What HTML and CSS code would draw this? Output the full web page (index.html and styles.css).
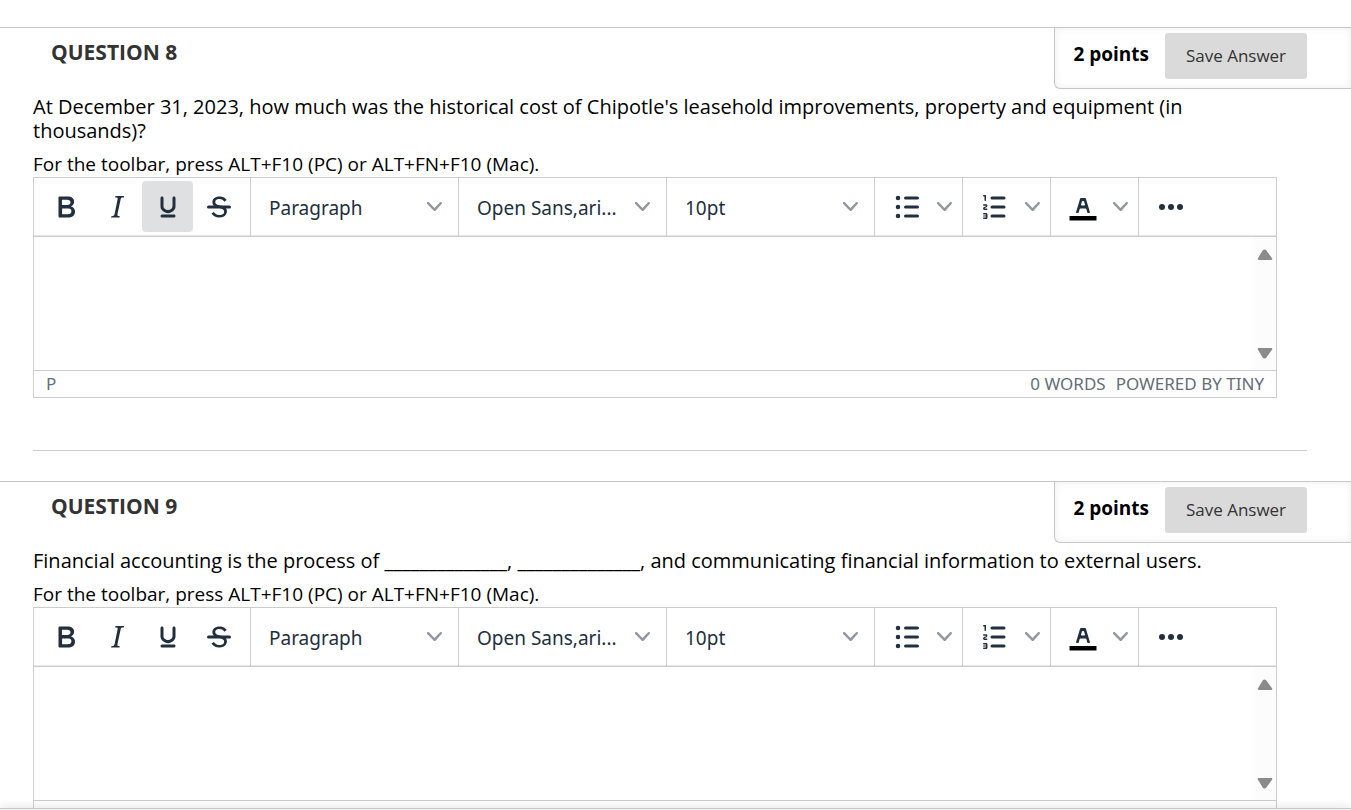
FILE: index.html
```html
<!DOCTYPE html>
<html lang="en">
<head>
    <meta charset="UTF-8">
    <meta name="viewport" content="width=device-width, initial-scale=1.0">
    <title>Take Test</title>
    <link rel="stylesheet" href="styles.css">
</head>
<body>
    <!-- icons shared by both editors -->
    <svg class="sprite" aria-hidden="true">
        <symbol id="bold" viewBox="0 0 24 24"><path d="M7.8 19c-.3 0-.5 0-.6-.2l-.2-.5V5.7c0-.2 0-.4.2-.5l.6-.2h5c1.5 0 2.7.3 3.5 1 .7.6 1.1 1.4 1.1 2.5a3 3 0 0 1-.6 1.9c-.4.6-1 1-1.6 1.2.4.1.9.3 1.3.6s.8.7 1 1.2c.4.4.5 1 .5 1.6 0 1.3-.4 2.3-1.3 3-.8.7-2.1 1-3.8 1H7.8zm5-8.3c.6 0 1.2-.1 1.6-.5.4-.3.6-.7.6-1.3 0-1.1-.8-1.7-2.3-1.7H9.3v3.5h3.4zm.5 6c.7 0 1.3-.1 1.7-.4.4-.4.6-.9.6-1.5s-.2-1-.7-1.4c-.4-.3-1-.4-2-.4H9.4v3.8h4z"/></symbol>
        <symbol id="italic" viewBox="0 0 24 24"><path d="M16.7 4.7l-.1.9h-.3c-.6 0-1 0-1.4.3-.3.3-.4.6-.5 1.1l-2.1 9.8v.6c0 .5.4.8 1.4.8h.2l-.2.8H8l.2-.8h.2c1.1 0 1.8-.5 2-1.5l2-9.8.1-.5c0-.6-.4-.8-1.4-.8h-.3l.2-.9h5.8z"/></symbol>
        <symbol id="underline" viewBox="0 0 24 24"><path d="M16 5c.6 0 1 .4 1 1v5.5a4 4 0 0 1-.4 1.8l-1 1.4a5.3 5.3 0 0 1-5.5 1 5 5 0 0 1-1.6-1c-.5-.4-.8-.9-1.1-1.4a4 4 0 0 1-.4-1.8V6c0-.6.4-1 1-1s1 .4 1 1v5.5c0 .3 0 .6.2 1l.6.7a3.3 3.3 0 0 0 2.2.8 3.4 3.4 0 0 0 2.2-.8c.3-.2.4-.5.6-.8l.2-.9V6c0-.6.4-1 1-1zM8 17h8c.6 0 1 .4 1 1s-.4 1-1 1H8a1 1 0 0 1 0-2z"/></symbol>
        <symbol id="strike" viewBox="0 0 24 24"><path d="M15.6 8.5c-.5-.7-1-1.1-1.3-1.3-.6-.4-1.3-.6-2-.6-2.7 0-2.8 1.7-2.8 2.1 0 1.6 1.8 2 3.2 2.3 4.4.9 4.6 2.8 4.6 3.9 0 1.4-.7 4.1-5 4.1A6.2 6.2 0 0 1 7 16.4l1.5-1.1c.4.6 1.6 2 3.7 2 1.6 0 2.5-.4 3-1.2.4-.8.3-2-.8-2.6-.7-.4-1.6-.7-2.9-1-1-.2-3.9-.8-3.9-3.6C7.6 6 10.3 5 12.4 5c2.9 0 4.2 1.6 4.7 2.4l-1.5 1.1z"/><path d="M5 11h14a1 1 0 0 1 0 2H5a1 1 0 0 1 0-2z"/></symbol>
        <symbol id="bullets" viewBox="0 0 24 24"><circle cx="6" cy="6" r="1.5"/><circle cx="6" cy="12" r="1.5"/><circle cx="6" cy="18" r="1.5"/><path d="M11 5h8a1 1 0 0 1 0 2h-8a1 1 0 0 1 0-2zm0 6h8a1 1 0 0 1 0 2h-8a1 1 0 0 1 0-2zm0 6h8a1 1 0 0 1 0 2h-8a1 1 0 0 1 0-2z"/></symbol>
        <symbol id="numbers" viewBox="0 0 24 24"><path d="M10 17h8a1 1 0 0 1 0 2h-8a1 1 0 0 1 0-2zm0-6h8a1 1 0 0 1 0 2h-8a1 1 0 0 1 0-2zm0-6h8a1 1 0 0 1 0 2h-8a1 1 0 1 1 0-2zM6 4v3.5c0 .3-.2.5-.5.5a.5.5 0 0 1-.5-.5V5h-.5a.5.5 0 0 1 0-1H6zm-1 8.800l.2.2h1.3c.3 0 .5.2.5.5s-.2.5-.5.5H4.9a1 1 0 0 1-.9-1V13c0-.4.3-.8.6-1l1.2-.4.2-.3a.2.2 0 0 0-.2-.2H4.500a.5.5 0 0 1-.5-.5c0-.3.2-.5.5-.5h1.6c.5 0 .9.4.9 1v.1c0 .4-.3.8-.6 1l-1.2.4-.2.3zM7 17v2c0 .6-.4 1-1 1H4.5a.5.5 0 0 1 0-1h1.2c.2 0 .3-.1.3-.3 0-.2-.1-.3-.3-.3H4.4a.4.4 0 1 1 0-.8h1.3c.2 0 .3-.1.3-.3 0-.2-.1-.3-.3-.3H4.5a.5.5 0 1 1 0-1H6c.6 0 1 .4 1 1z"/></symbol>
        <symbol id="color" viewBox="0 0 24 24"><path fill="#000" d="M3 18h18v3H3z"/><path d="M8.7 16h-.8a.5.5 0 0 1-.5-.6l2.7-9c.1-.3.3-.4.5-.4h2.8c.2 0 .4.1.5.4l2.7 9a.5.5 0 0 1-.5.6h-.8a.5.5 0 0 1-.4-.4l-.7-2.2c0-.3-.3-.4-.5-.4h-3.4c-.2 0-.4.1-.5.4l-.7 2.2c0 .3-.2.4-.4.4zm2.6-7.6l-.6 2a.5.5 0 0 0 .5.6h1.6a.5.5 0 0 0 .5-.6l-.6-2c0-.3-.3-.4-.5-.4h-.4c-.2 0-.4.1-.5.4z"/></symbol>
        <symbol id="more" viewBox="0 0 24 24"><circle cx="6" cy="12" r="2"/><circle cx="12" cy="12" r="2"/><circle cx="18" cy="12" r="2"/></symbol>
        <symbol id="chevron" viewBox="0 0 10 10"><path d="M8.7 2.2c.3-.3.8-.3 1 0 .4.4.4.9 0 1.2L5.7 7.8c-.3.3-.9.3-1.2 0L.2 3.4a.8.8 0 0 1 0-1.2c.3-.3.8-.3 1.1 0L5 6l3.7-3.8z"/></symbol>
        <symbol id="arrow-up" viewBox="0 0 16 12"><path d="M5.8 1.2C6.500.3 8.500.3 9.200 1.200l5.800 8c.7 1 .3 1.800-.9 1.800H1.900C.7 11 .3 10.200 1 9.200z"/></symbol>
        <symbol id="arrow-down" viewBox="0 0 16 12"><path d="M5.800 10.800c.7.9 2.700.9 3.400 0l5.800-8c.7-1 .3-1.800-.9-1.800H1.900C.7 1 .3 1.800 1 2.800z"/></symbol>
    </svg>

    <main class="test">
        <section class="question">
            <header class="question-header">
                <h3>QUESTION 8</h3>
                <div class="points">
                    <strong>2 points</strong>
                    <button type="button" class="save">Save Answer</button>
                </div>
            </header>
            <div class="question-body">
                <p class="prompt">At December 31, 2023, how much was the historical cost of Chipotle's leasehold improvements, property and equipment (in thousands)?</p>
                <label class="hint" for="answer8">For the toolbar, press ALT+F10 (PC) or ALT+FN+F10 (Mac).</label>
                <div class="editor">
                    <div class="toolbar">
                        <div class="group">
                            <button type="button" class="tool" aria-label="Bold"><svg><use href="#bold"/></svg></button>
                            <button type="button" class="tool" aria-label="Italic"><svg><use href="#italic"/></svg></button>
                            <button type="button" class="tool active" aria-label="Underline"><svg><use href="#underline"/></svg></button>
                            <button type="button" class="tool" aria-label="Strikethrough"><svg><use href="#strike"/></svg></button>
                        </div>
                        <div class="group">
                            <div class="dropdown">
                                <select aria-label="Blocks"><option>Paragraph</option></select>
                                <svg class="chevron"><use href="#chevron"/></svg>
                            </div>
                        </div>
                        <div class="group">
                            <div class="dropdown">
                                <select aria-label="Fonts"><option>Open Sans,ari...</option></select>
                                <svg class="chevron"><use href="#chevron"/></svg>
                            </div>
                        </div>
                        <div class="group">
                            <div class="dropdown">
                                <select aria-label="Font sizes"><option>10pt</option></select>
                                <svg class="chevron"><use href="#chevron"/></svg>
                            </div>
                        </div>
                        <div class="group">
                            <button type="button" class="tool" aria-label="Bullet list"><svg><use href="#bullets"/></svg></button>
                            <button type="button" class="tool-menu" aria-label="Bullet list menu"><svg class="chevron"><use href="#chevron"/></svg></button>
                        </div>
                        <div class="group">
                            <button type="button" class="tool" aria-label="Numbered list"><svg><use href="#numbers"/></svg></button>
                            <button type="button" class="tool-menu" aria-label="Numbered list menu"><svg class="chevron"><use href="#chevron"/></svg></button>
                        </div>
                        <div class="group">
                            <button type="button" class="tool" aria-label="Text color"><svg><use href="#color"/></svg></button>
                            <button type="button" class="tool-menu" aria-label="Text color menu"><svg class="chevron"><use href="#chevron"/></svg></button>
                        </div>
                        <div class="group">
                            <button type="button" class="tool" aria-label="More"><svg><use href="#more"/></svg></button>
                        </div>
                    </div>
                    <div class="edit-area">
                        <textarea id="answer8"></textarea>
                        <div class="scroll">
                            <svg><use href="#arrow-up"/></svg>
                            <svg><use href="#arrow-down"/></svg>
                        </div>
                    </div>
                    <div class="statusbar">
                        <span class="path">P</span>
                        <span>0 WORDS</span>
                        <a href="#">POWERED BY TINY</a>
                    </div>
                </div>
                <hr>
            </div>
        </section>

        <section class="question">
            <header class="question-header">
                <h3>QUESTION 9</h3>
                <div class="points">
                    <strong>2 points</strong>
                    <button type="button" class="save">Save Answer</button>
                </div>
            </header>
            <div class="question-body">
                <p class="prompt">Financial accounting is the process of ______________, ______________, and communicating financial information to external users.</p>
                <label class="hint" for="answer9">For the toolbar, press ALT+F10 (PC) or ALT+FN+F10 (Mac).</label>
                <div class="editor">
                    <div class="toolbar">
                        <div class="group">
                            <button type="button" class="tool" aria-label="Bold"><svg><use href="#bold"/></svg></button>
                            <button type="button" class="tool" aria-label="Italic"><svg><use href="#italic"/></svg></button>
                            <button type="button" class="tool" aria-label="Underline"><svg><use href="#underline"/></svg></button>
                            <button type="button" class="tool" aria-label="Strikethrough"><svg><use href="#strike"/></svg></button>
                        </div>
                        <div class="group">
                            <div class="dropdown">
                                <select aria-label="Blocks"><option>Paragraph</option></select>
                                <svg class="chevron"><use href="#chevron"/></svg>
                            </div>
                        </div>
                        <div class="group">
                            <div class="dropdown">
                                <select aria-label="Fonts"><option>Open Sans,ari...</option></select>
                                <svg class="chevron"><use href="#chevron"/></svg>
                            </div>
                        </div>
                        <div class="group">
                            <div class="dropdown">
                                <select aria-label="Font sizes"><option>10pt</option></select>
                                <svg class="chevron"><use href="#chevron"/></svg>
                            </div>
                        </div>
                        <div class="group">
                            <button type="button" class="tool" aria-label="Bullet list"><svg><use href="#bullets"/></svg></button>
                            <button type="button" class="tool-menu" aria-label="Bullet list menu"><svg class="chevron"><use href="#chevron"/></svg></button>
                        </div>
                        <div class="group">
                            <button type="button" class="tool" aria-label="Numbered list"><svg><use href="#numbers"/></svg></button>
                            <button type="button" class="tool-menu" aria-label="Numbered list menu"><svg class="chevron"><use href="#chevron"/></svg></button>
                        </div>
                        <div class="group">
                            <button type="button" class="tool" aria-label="Text color"><svg><use href="#color"/></svg></button>
                            <button type="button" class="tool-menu" aria-label="Text color menu"><svg class="chevron"><use href="#chevron"/></svg></button>
                        </div>
                        <div class="group">
                            <button type="button" class="tool" aria-label="More"><svg><use href="#more"/></svg></button>
                        </div>
                    </div>
                    <div class="edit-area">
                        <textarea id="answer9"></textarea>
                        <div class="scroll">
                            <svg><use href="#arrow-up"/></svg>
                            <svg><use href="#arrow-down"/></svg>
                        </div>
                    </div>
                    <div class="statusbar"></div>
                </div>
            </div>
        </section>
    </main>
    <footer class="submit-bar"></footer>
</body>
</html>
```
FILE: styles.css
```css
* {
    box-sizing: border-box;
}

body {
    display: flex;
    flex-direction: column;
    height: 100vh;
    margin: 0;
    overflow: hidden;
    font-family: "Open Sans", Arial, sans-serif;
    font-size: 19px;
    line-height: 24px;
    color: #000;
    background-color: #fff;
}

button, select, textarea {
    margin: 0;
    padding: 0;
    border: none;
    background: none;
    font-family: inherit;
}

.sprite {
    display: none;
}

.test {
    flex: 1;
    min-height: 0;
    padding-top: 27px;
    overflow: hidden;
}

.question-header {
    display: flex;
    justify-content: space-between;
    align-items: flex-start;
    border-top: 1px solid #c7c7c7;
}

.question-header h3 {
    margin: 12px 0 0 51px;
    font-size: 21px;
    line-height: 24px;
    color: #333;
}

.points {
    display: flex;
    align-items: flex-start;
    gap: 16px;
    padding: 5px 44px 9px 18px;
    border-left: 1px solid #c7c7c7;
    border-bottom: 1px solid #c7c7c7;
    border-bottom-left-radius: 6px;
    box-shadow: inset 0 0 8px #eee;
}

.points strong {
    padding-top: 9px;
}

.save {
    width: 142px;
    height: 46px;
    padding-bottom: 2px;
    border-radius: 3px;
    background-color: #dadada;
    color: #333;
    font-size: 17px;
}

.question-body {
    padding: 6px 44px 0 33px;
}

.prompt {
    margin: 0 30px 9px 0;
    font-size: 20px;
}

.hint {
    display: block;
    line-height: 25px;
}

.editor {
    margin-right: 30px;
    border: 1px solid #ccc;
    color: #222f3e;
}

.toolbar {
    display: flex;
    border-bottom: 1px solid #ccc;
    box-shadow: inset 0 -1px #e6e6e6;
}

.group {
    display: flex;
    padding: 3px 6px 4px;
    border-right: 1px solid #ccc;
}

.group:last-child {
    border-right: none;
}

.group svg {
    fill: #222f3e;
}

.tool {
    display: flex;
    align-items: center;
    justify-content: center;
    width: 51px;
    height: 51px;
    border-radius: 4px;
}

.tool svg {
    width: 36px;
    height: 36px;
}

.tool.active {
    background-color: #dee0e2;
}

.tool-menu {
    display: flex;
    align-items: center;
    justify-content: center;
    width: 24px;
}

.group .chevron {
    width: 15px;
    height: 15px;
    fill: #9097a0;
}

.dropdown {
    display: grid;
    align-items: center;
    width: 195px;
    height: 51px;
}

.dropdown select,
.dropdown .chevron {
    grid-area: 1 / 1;
}

.dropdown select {
    appearance: none;
    height: 51px;
    padding: 2px 36px 0 12px;
    color: #222f3e;
    font-family: "Noto Sans", sans-serif;
    font-size: 19px;
}

.dropdown .chevron {
    justify-self: end;
    margin-right: 10px;
    pointer-events: none;
}

.edit-area {
    display: flex;
    height: 133px;
}

.edit-area textarea {
    flex: 1;
    padding: 12px;
    outline: none;
    resize: none;
    font-size: 19px;
}

.scroll {
    display: flex;
    flex-direction: column;
    justify-content: space-between;
    align-items: center;
    width: 23px;
    padding: 12px 0 11px;
    background-color: #fcfcfc;
}

.scroll svg {
    width: 16px;
    height: 12px;
    fill: #8b8b8b;
}

.statusbar {
    display: flex;
    gap: 10px;
    height: 27px;
    padding: 0 12px;
    border-top: 1px solid #ccc;
    color: #646d78;
    font-family: "Noto Sans", sans-serif;
    font-size: 17px;
    line-height: 26px;
}

.statusbar a {
    color: inherit;
    text-decoration: none;
}

.path {
    flex: 1;
}

hr {
    height: 1px;
    margin: 52px 0 30px;
    border: none;
    background-color: #ccc;
}

.submit-bar {
    z-index: 1;
    height: 2px;
    border-top: 1px solid #c7c7c7;
    background-color: #f5f5f5;
    box-shadow: 0 0 8px rgba(0, 0, 0, 0.3);
}
```
